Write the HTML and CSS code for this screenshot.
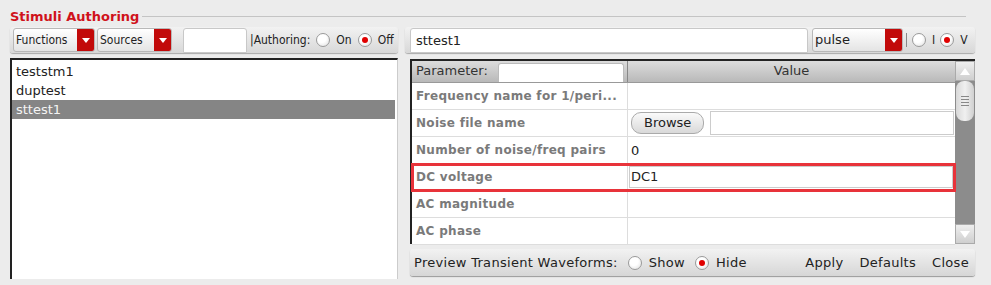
FILE: index.html
```html
<!DOCTYPE html>
<html lang="en">
<head>
    <meta charset="UTF-8">
    <title>Stimuli Authoring</title>
    <link rel="stylesheet" href="styles.css">
</head>
<body>
    <div class="group">
        <div class="group-title"><span>Stimuli Authoring</span><div class="rule"></div></div>
        <div class="columns">
            <div class="left">
                <div class="toolbar">
                    <div class="combo combo-fn"><span>Functions</span><div class="drop"></div></div>
                    <div class="combo combo-src"><span>Sources</span><div class="drop"></div></div>
                    <div class="field small"></div>
                    <span class="label">|Authoring:</span>
                    <span class="radio"></span><span class="label">On</span>
                    <span class="radio on"></span><span class="label">Off</span>
                </div>
                <div class="list">
                    <div class="item">teststm1</div>
                    <div class="item">duptest</div>
                    <div class="item selected">sttest1</div>
                </div>
            </div>
            <div class="right">
                <div class="toolbar">
                    <div class="field name">sttest1</div>
                    <div class="combo combo-type"><span>pulse</span><div class="drop"></div></div>
                    <span class="sep"></span>
                    <span class="radio"></span><span class="label">I</span>
                    <span class="radio on"></span><span class="label">V</span>
                </div>
                <div class="table">
                    <div class="grid">
                        <div class="head">
                            <div class="hcell param">Parameter:<div class="filter"></div></div>
                            <div class="hcell value">Value</div>
                        </div>
                        <div class="row"><div class="key">Frequency name for 1/peri...</div><div class="val"></div></div>
                        <div class="row"><div class="key">Noise file name</div><div class="val"><span class="btn">Browse</span><span class="cellfield"></span></div></div>
                        <div class="row"><div class="key">Number of noise/freq pairs</div><div class="val">0</div></div>
                        <div class="row marked"><div class="key">DC voltage</div><div class="val"><span class="cellfield text">DC1</span></div></div>
                        <div class="row"><div class="key">AC magnitude</div><div class="val"></div></div>
                        <div class="row"><div class="key">AC phase</div><div class="val"></div></div>
                    </div>
                    <div class="scroll">
                        <div class="arrow up"></div>
                        <div class="thumb"><i></i><i></i><i></i><i></i></div>
                        <div class="track"></div>
                        <div class="arrow down"></div>
                    </div>
                </div>
                <div class="bottombar">
                    <span class="label">Preview Transient Waveforms:</span>
                    <span class="radio"></span><span class="label">Show</span>
                    <span class="radio on"></span><span class="label">Hide</span>
                    <span class="spacer"></span>
                    <span class="label action">Apply</span>
                    <span class="label action">Defaults</span>
                    <span class="label action">Close</span>
                </div>
            </div>
        </div>
    </div>
</body>
</html>
```

FILE: styles.css
```css
body {
    margin: 0;
    width: 991px;
    height: 285px;
    overflow: hidden;
    background: #ececec;
    font-family: 'DejaVu Sans', sans-serif;
    font-size: 12px;
    color: #222;
}

.group {
    padding: 7px 16px 0 10px;
}

.group-title {
    display: flex;
    align-items: center;
    height: 18px;
}

.group-title span {
    color: #d0121b;
    font-weight: bold;
    font-size: 13px;
    margin-right: 3px;
}

.group-title .rule {
    flex: 1;
    height: 1px;
    background: #c4c4c4;
    margin-right: 9px;
}

.columns {
    display: flex;
    gap: 7px;
    margin-top: 2px;
}

.left {
    width: 388px;
    display: flex;
    flex-direction: column;
}

.right {
    width: 570px;
    display: flex;
    flex-direction: column;
}

.toolbar {
    display: flex;
    align-items: center;
    height: 26px;
    padding: 0 2px 0 3px;
    background: linear-gradient(#f2f2f2, #d8d8d8);
    border-radius: 3px;
    box-shadow: 0 1px 1px #aaa;
    font-family: 'DejaVu Sans Condensed', 'DejaVu Sans', sans-serif;
}

.right .toolbar {
    padding-left: 5px;
}

.combo {
    display: flex;
    flex: none;
    align-items: stretch;
    height: 24px;
    border: 1px solid #b8b8b8;
    border-radius: 3px;
    background: linear-gradient(#fff, #e4e4e4);
    overflow: hidden;
    box-sizing: border-box;
}

.combo span {
    flex: 1;
    padding-left: 2px;
    line-height: 22px;
}

.combo .drop {
    width: 17px;
    background: #c20a0a;
    position: relative;
}

.combo .drop::after {
    content: "";
    position: absolute;
    left: 5px;
    top: 9px;
    border-left: 4px solid transparent;
    border-right: 4px solid transparent;
    border-top: 5px solid #fff;
}

.combo-fn {
    width: 82px;
}

.combo-src {
    width: 75px;
    margin-left: 2px;
}

.combo-type {
    width: 91px;
    margin-left: 4px;
    font-family: 'DejaVu Sans', sans-serif;
    font-size: 13px;
}

.field {
    flex: none;
    background: #fff;
    border: 1px solid #c8c8c8;
    border-radius: 3px 3px 0 0;
    height: 25px;
    box-sizing: border-box;
    margin-top: 1px;
}

.field.small {
    width: 64px;
    margin-left: 11px;
    margin-right: 3px;
}

.field.name {
    width: 398px;
    padding-left: 5px;
    line-height: 23px;
    font-family: 'DejaVu Sans', sans-serif;
    font-size: 13px;
}

.label {
    white-space: nowrap;
}

.radio {
    width: 12px;
    height: 12px;
    border-radius: 50%;
    border: 1px solid #9a9a9a;
    background: radial-gradient(circle at 40% 35%, #fff 40%, #ddd);
    margin: 0 6px 0 6px;
    position: relative;
    flex: none;
}

.radio.on::after {
    content: "";
    position: absolute;
    left: 3px;
    top: 3px;
    width: 6px;
    height: 6px;
    border-radius: 50%;
    background: #e00000;
}

.right .toolbar .radio {
    margin: 0 6px 0 5px;
}

.sep {
    width: 1px;
    height: 14px;
    background: #888;
    margin-left: 3px;
}

.list {
    margin-top: 5px;
    height: 221px;
    background: #fff;
    border-top: 2px solid #222;
    border-left: 2px solid #222;
    border-right: 1px solid #ccc;
    font-size: 13px;
    padding-top: 2px;
    box-sizing: border-box;
}

.item {
    height: 19px;
    line-height: 19px;
    padding-left: 4px;
}

.item.selected {
    background: #858585;
    color: #f4f4f4;
    margin-right: 2px;
}

.table {
    margin-top: 6px;
    margin-left: 5px;
    display: flex;
    height: 185px;
    border-top: 2px solid #222;
    border-left: 2px solid #222;
    box-sizing: border-box;
    background: #fff;
}

.grid {
    flex: 1;
}

.head {
    display: flex;
    height: 21px;
    background: linear-gradient(#dcdcdc, #b9b9b9);
    border-bottom: 1px solid #999;
}

.hcell {
    line-height: 20px;
    font-size: 13px;
}

.hcell.param {
    width: 211px;
    display: flex;
    padding-left: 4px;
    border-right: 1px solid #888;
    color: #333;
}

.filter {
    width: 124px;
    height: 18px;
    margin: 2px 0 0 10px;
    background: #fff;
    border-radius: 3px 3px 0 0;
    border: 1px solid #bbb;
    border-bottom: 0;
}

.hcell.value {
    flex: 1;
    text-align: center;
    color: #333;
}

.row {
    display: flex;
    height: 27px;
    border-bottom: 1px solid #ddd;
    box-sizing: border-box;
}

.key {
    width: 211px;
    padding-left: 4px;
    line-height: 26px;
    font-weight: bold;
    color: #7a7a7a;
    border-right: 1px solid #ddd;
    letter-spacing: 0.3px;
    white-space: nowrap;
    overflow: hidden;
}

.val {
    flex: 1;
    display: flex;
    align-items: center;
    padding-left: 3px;
    font-size: 13px;
}

.btn {
    height: 20px;
    line-height: 20px;
    padding: 0 12px;
    border: 1px solid #aaa;
    border-radius: 10px;
    background: linear-gradient(#fafafa, #d9d9d9);
    font-size: 13px;
    margin-right: 6px;
}

.cellfield {
    flex: 1;
    height: 24px;
    border: 1px solid #ccc;
    box-sizing: border-box;
    margin-right: 1px;
    background: #fff;
}

.cellfield.text {
    height: 22px;
    line-height: 20px;
    padding-left: 1px;
    margin-left: -2px;
    margin-right: 2px;
}

.row.marked {
    outline: 3px solid #e8333a;
    outline-offset: -2px;
    position: relative;
}

.scroll {
    width: 20px;
    display: flex;
    flex-direction: column;
    background: #8c8c8c;
}

.arrow {
    height: 20px;
    background: linear-gradient(#eee, #cfcfcf);
    position: relative;
    border: 1px solid #aaa;
    box-sizing: border-box;
}

.arrow::after {
    content: "";
    position: absolute;
    left: 4px;
    border-left: 5px solid transparent;
    border-right: 5px solid transparent;
}

.arrow.up::after {
    top: 6px;
    border-bottom: 7px solid #fff;
}

.arrow.down::after {
    top: 6px;
    border-top: 7px solid #fff;
}

.thumb {
    height: 40px;
    margin: 0 1px;
    border-radius: 8px;
    background: linear-gradient(90deg, #d8d8d8, #f0f0f0, #d0d0d0);
    display: flex;
    flex-direction: column;
    justify-content: center;
    align-items: center;
    gap: 2px;
}

.thumb i {
    display: block;
    width: 8px;
    height: 1px;
    background: #888;
}

.track {
    flex: 1;
}

.bottombar {
    display: flex;
    align-items: center;
    height: 27px;
    margin-top: 5px;
    margin-left: 5px;
    padding: 0 6px 0 4px;
    background: linear-gradient(#f2f2f2, #d6d6d6);
    border-radius: 3px;
    box-shadow: 0 1px 1px #999;
    font-size: 13px;
    letter-spacing: 0.3px;
}

.bottombar .radio {
    margin: 0 7px 0 10px;
}

.spacer {
    flex: 1;
}

.action {
    margin-left: 16px;
}
```
